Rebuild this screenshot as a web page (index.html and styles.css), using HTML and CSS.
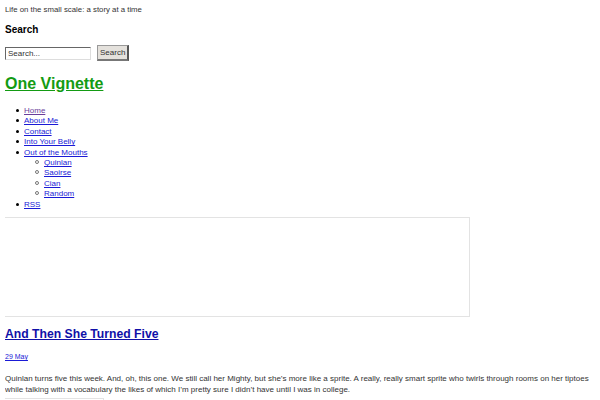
FILE: index.html
```html
<!DOCTYPE html>
<html>
<head>
    <title>One Vignette</title>
    <link rel="stylesheet" href="styles.css">
</head>
<body>
    <!-- Tagline and sidebar search -->
    <div class="tagline">Life on the small scale: a story at a time</div>

    <div class="search">
        <h3>Search</h3>
        <form class="search-form">
            <input type="text" class="search-input" value="Search...">
            <button type="button" class="search-button">Search</button>
        </form>
    </div>

    <h1 class="site-title"><a href="#">One Vignette</a></h1>

    <ul class="nav">
        <li><a href="#" class="visited">Home</a></li>
        <li><a href="#">About Me</a></li>
        <li><a href="#">Contact</a></li>
        <li><a href="#">Into Your Belly</a></li>
        <li><a href="#">Out of the Mouths</a>
            <ul>
                <li><a href="#">Quinlan</a></li>
                <li><a href="#">Saoirse</a></li>
                <li><a href="#">Cian</a></li>
                <li><a href="#">Random</a></li>
            </ul>
        </li>
        <li><a href="#">RSS</a></li>
    </ul>

    <div class="banner"></div>

    <div class="post">
        <h2 class="post-title"><a href="#">And Then She Turned Five</a></h2>
        <div class="post-date"><a href="#">29 May</a></div>
        <p>Quinlan turns five this week. And, oh, this one. We still call her Mighty, but she&rsquo;s more like a sprite. A really, really smart sprite who twirls through rooms on her tiptoes while talking with a vocabulary the likes of which I&rsquo;m pretty sure I didn&rsquo;t have until I was in college.</p>
        <div class="post-image"></div>
    </div>
</body>
</html>
```

FILE: styles.css
```css
body {
    font-family: "Liberation Sans", Arial, sans-serif;
    font-size: 8px;
    color: #333;
    margin: 5px;
    background: #fff;
}
a {
    color: #1a1ad6;
}
a.visited {
    color: #6a3d9a;
}
.tagline {
    font-size: 7.8px;
    line-height: 10px;
}
/* Search box */
.search h3 {
    font-size: 10px;
    color: #000;
    margin: 9px 0 10px;
}
.search-form {
    display: flex;
    align-items: center;
    gap: 6px;
    margin: 0;
}
.search-input {
    width: 80px;
    height: 9px;
    padding: 1px 2px;
    font-family: inherit;
    font-size: 8px;
    color: #333;
    border: 1px solid #999;
    border-top-color: #666;
    border-left-color: #666;
    border-right-color: #ddd;
    border-bottom-color: #ddd;
    margin: 0;
}
.search-button {
    height: 16px;
    padding: 0 2px;
    font-family: inherit;
    font-size: 8px;
    color: #333;
    background: #e4e1dc;
    border: 1px solid #999;
    border-right: 2px solid #555;
    border-bottom: 2px solid #777;
    margin: 0;
}
/* Site title */
.site-title {
    font-size: 16px;
    margin: 13px 0 12px;
    line-height: 20px;
}
.site-title a {
    color: #139b13;
}
/* Navigation */
.nav {
    margin: 0;
    padding-left: 19px;
    line-height: 10.4px;
    list-style: none;
}
.nav li::before {
    content: "";
    display: inline-block;
    width: 3px;
    height: 3px;
    border-radius: 50%;
    background: #000;
    margin-left: -8px;
    margin-right: 5px;
    vertical-align: 1px;
}
.nav ul {
    margin: 0;
    padding-left: 20px;
    list-style: none;
}
.nav ul li::before {
    width: 2px;
    height: 2px;
    background: none;
    border: 1px solid #777;
    margin-left: -9px;
    margin-right: 5px;
}
/* Empty banner box */
.banner {
    width: 464px;
    height: 98px;
    border: 1px solid #e3e3e3;
    margin: 7px 0 0 -1px;
}
/* Post */
.post-title {
    font-size: 12.2px;
    margin: 9px 0 0;
    line-height: 16px;
}
.post-title a {
    color: #1010a8;
}
.post-date {
    font-size: 7px;
    margin-top: 10px;
    line-height: 10px;
}
.post p {
    margin: 11px 0 0;
    line-height: 11px;
    font-size: 8px;
}
.post-image {
    width: 98px;
    height: 20px;
    border: 1px solid #e3e3e3;
    margin: 3px 0 0 -1px;
}
```
